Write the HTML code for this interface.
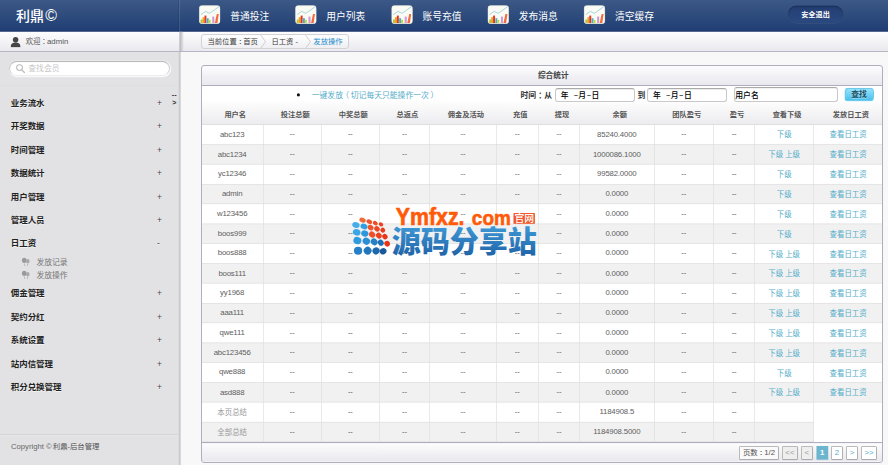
<!DOCTYPE html>
<html lang="zh-CN">
<head>
<meta charset="utf-8">
<title>利鼎-后台管理</title>
<style>
*{box-sizing:border-box;margin:0;padding:0}
html,body{width:888px;height:465px;overflow:hidden;background:#f8f8f8}
body{font-family:"Liberation Sans","Noto Sans CJK SC",sans-serif;font-size:12px;color:#666;position:relative}
#stage{position:absolute;left:0;top:0;width:1366px;height:716px;transform:scale(0.65008);transform-origin:0 0;overflow:hidden;background:#f8f8f8}
a{text-decoration:none;color:#55adc9}
.c{display:inline-block;position:static !important;width:10px;text-indent:2.5px;overflow:visible;white-space:nowrap}
/* header */
#hd{position:absolute;left:0;top:0;width:1366px;height:49px;background:linear-gradient(#3c5886 0%,#2d4b7c 50%,#213f75 94%,#1a3467 100%)}
#hd .sep{position:absolute;left:275.6px;top:0;width:1.5px;height:49px;background:rgba(255,255,255,.2);box-shadow:-1.5px 0 0 rgba(10,25,60,.25)}
#logo{position:absolute;left:24.5px;top:9.8px;font-weight:500;font-size:21.5px;line-height:30px;color:#fff;letter-spacing:0}
.nav{position:absolute;top:0;height:49px}
.nav .ico{position:absolute;left:0;top:8px;width:33px;height:29px}
.nav span{position:absolute;left:48px;top:12px;font-size:15px;line-height:26px;color:#fff;white-space:nowrap}
#logout{position:absolute;left:1212px;top:9px;width:85px;height:26px;border-radius:13px;background:linear-gradient(#233d72,#2b4a80);box-shadow:inset 0 1px 2px rgba(0,0,0,.35),0 1px 0 rgba(255,255,255,.1);color:#fff;font-size:11px;font-weight:bold;line-height:27.5px;text-align:center}
/* subbar */
#sub{position:absolute;left:0;top:49px;width:1366px;height:31px;background:linear-gradient(#fdfdfe,#e8e8ee);border-bottom:1px solid transparent}
#sub .sep{position:absolute;left:275.5px;top:0;width:7px;height:30px;background:linear-gradient(90deg,#b2b2b8,#d2d2d8 55%,rgba(235,235,240,0))}
#user{position:absolute;left:39.5px;top:0;font-size:11.4px;line-height:30px;color:#555;white-space:nowrap}
#uicon{position:absolute;left:16px;top:7px;width:16px;height:17px}
#crumb{position:absolute;left:310px;top:4px;height:22.5px;width:227px;border:1px solid transparent;border-radius:4px;background:linear-gradient(#fff,#eeeef2);font-size:11.3px;line-height:20px;color:#3c3c3c}
#crumb>span{position:absolute;top:0;white-space:nowrap}
#crumb svg{position:absolute;top:0;width:12px;height:20.5px}
/* sidebar */
#side{position:absolute;left:0;top:80px;width:278px;height:636px;background:#e2e2e4}
#side:after{content:"";position:absolute;left:275.3px;top:0;width:2.8px;height:636px;background:linear-gradient(90deg,#c6c6ca,#d4d4d8)}
#search{position:absolute;left:13.5px;top:12.5px;width:249px;height:25px;border-radius:12.5px;background:#fff;border:1px solid transparent;box-shadow:0 1px 0 #f4f4f4,inset 0 1px 2px rgba(0,0,0,.12)}
#search span{position:absolute;left:29px;top:1px;line-height:21px;font-size:12px;color:#c8c8c8}
#sline{position:absolute;left:0;top:51px;width:275px;height:1px;background:#dcdcde;box-shadow:0 1px 0 #e5e5e7}
.mi{position:absolute;left:16.5px;margin-top:1px;font-size:13px;font-weight:bold;color:#222;line-height:36px;height:36px;width:240px;text-shadow:0 1px 0 #f4f4f4;white-space:nowrap}
.mi i{position:absolute;left:225px;top:-0.2px;font-style:normal;font-weight:normal;font-size:13px;color:#444}
.smi{position:absolute;left:56px;font-size:12px;color:#777;line-height:20px;height:20px;white-space:nowrap}
.smi b{position:absolute;left:-23px;top:3px;width:13px;height:14px}
#toggle{position:absolute;left:262px;top:59.0px;font-size:11px;font-weight:bold;line-height:13px;color:#333;width:12px;text-align:center}
#cline{position:absolute;left:0;top:588px;width:275px;height:1px;background:#cdcdd0;box-shadow:0 1px 0 #ececee}
#copy{position:absolute;left:17px;top:597px;font-size:11.8px;line-height:20px;color:#666;white-space:nowrap}
/* panel */
#panel{position:absolute;left:308.7px;top:100.2px;width:1049.3px;height:611px;border:1px solid transparent;border-radius:5px;background:#fff;overflow:hidden}
#ptitle{position:absolute;left:0;top:0;width:1047.3px;height:31px;background:linear-gradient(#fdfdfe,#e8e8ee);border-bottom:1px solid transparent}
#ptitle span{position:absolute;left:490.5px;width:100px;text-align:center;top:0;line-height:30px;font-weight:bold;font-size:11.8px;color:#444}
#tool{position:absolute;left:0;top:31px;width:1047.3px;height:60px;background:linear-gradient(#fff 0%,#fff 35%,#ececef 100%);border-bottom:1px solid #d0d0d6}
#tool .t{position:absolute;top:4px;line-height:20px;white-space:nowrap}
.inp{position:absolute;top:4px;height:21px;border:1px solid transparent;border-radius:4px;background:#fff;box-shadow:inset 0 1px 1px rgba(0,0,0,.1);font-size:12px;line-height:19px;color:#000;font-weight:500;padding-left:8px;white-space:nowrap}
#btn{position:absolute;left:988px;top:3px;width:45.5px;height:21px;border-radius:5.5px;border:1px solid transparent;background-clip:border-box;background:linear-gradient(#9ae3fa,#49beed);color:#1c4d60;font-size:12px;line-height:18px;text-align:center;font-weight:bold;text-shadow:0 1px 0 rgba(255,255,255,.4)}
table{position:absolute;left:0;top:60.4px;border-collapse:collapse;table-layout:fixed;width:1047.3px}
th{height:30px;font-size:11.1px;font-weight:bold;color:#555;text-align:center;padding:0 0 1.6px 9px;vertical-align:middle;line-height:20px}
td{height:30.5px;font-size:11.4px;color:#666;text-align:center;padding:0 0 1px 0;border-right:1px solid #ddd;border-bottom:1px solid #ddd;vertical-align:middle;line-height:20px;white-space:nowrap}
td i{font-style:normal;position:relative;top:-0.8px;color:#555}
td:last-child{border-right:0}
td.g{color:#999}
td.l{font-size:12px;letter-spacing:-0.28px;color:#5e5e5e}
td a,td.g span{position:relative;top:1.2px}
tr.e td{background:#f1f1f1}
td.w{background:#fff !important;border-bottom:0}
#pfoot{position:absolute;left:0;top:579.4px;width:1047.3px;height:31px;background:linear-gradient(#fdfdfe,#e6e6ec);border-top:1px solid transparent}
.pg{position:absolute;top:4px;height:21px;border:1px solid transparent;background:#fff;font-size:12px;line-height:19px;text-align:center;color:#55adc9;box-shadow:0 1px 1px rgba(0,0,0,.08);white-space:nowrap}
.pg.d{background:#eee;color:#999}
.pg.a{background:#6bb5cf;color:#fff;font-weight:bold}
#tool>*,#pfoot>*,#ptitle>*{margin-left:0.9px}
#ov{position:absolute;left:0;top:0;width:888px;height:465px;pointer-events:none}
#ov div{position:absolute;box-sizing:border-box}
.ln{background:#adafbf}
.bx{border:1px solid #bababa;border-bottom-color:#acacac;border-right-color:#b0b0b0;border-radius:1.5px}
.dh{display:inline-block;transform:scaleX(1.9) translateY(-1px);margin:0 2px 0 2.4px}
.ib{border:1px solid #c9c9c9;border-top-color:#aaa;border-radius:3px}
/* watermark */
#wm{position:absolute;left:345px;top:205px;width:200px;height:55px;overflow:visible}
</style>
</head>
<body>
<div id="stage">
  <div id="hd">
    <div id="logo">利鼎<span style="font-size:24.5px;margin-left:2px;position:relative;top:0.5px">©</span></div>
    <div class="sep"></div>
    <div class="nav" style="left:306px"><svg class="ico" viewBox="0 0 33 29"><use href="#chart"/></svg><span>普通投注</span></div>
    <div class="nav" style="left:454px"><svg class="ico" viewBox="0 0 33 29"><use href="#chart"/></svg><span>用户列表</span></div>
    <div class="nav" style="left:602px"><svg class="ico" viewBox="0 0 33 29"><use href="#chart"/></svg><span>账号充值</span></div>
    <div class="nav" style="left:750px"><svg class="ico" viewBox="0 0 33 29"><use href="#chart"/></svg><span>发布消息</span></div>
    <div class="nav" style="left:898px"><svg class="ico" viewBox="0 0 33 29"><use href="#chart"/></svg><span>清空缓存</span></div>
    <div id="logout">安全退出</div>
  </div>
  <div id="sub">
    <svg id="uicon" viewBox="0 0 16 17"><circle cx="8" cy="5" r="4.2" fill="#444"/><path d="M0.5 16.5 C0.5 11 4 9.5 8 9.5 C12 9.5 15.5 11 15.5 16.5 Z" fill="#444"/></svg>
    <div id="user">欢迎<span class="c">：</span><span style="font-size:12px">admin</span></div>
    <div class="sep"></div>
    <div id="crumb"><span style="left:8px">当前位置<span class="c">：</span>首页</span><span style="left:106.5px">日工资 -</span><span style="left:171px;color:#1f8ecb">发放操作</span>
      <svg style="left:87px" viewBox="0 0 12 20.5"><path d="M3 0 L10.5 10.25 L3 20.5" fill="none" stroke="#c2c2c8" stroke-width="1.2"/></svg>
      <svg style="left:155.5px" viewBox="0 0 12 20.5"><path d="M3 0 L10.5 10.25 L3 20.5" fill="none" stroke="#c2c2c8" stroke-width="1.2"/></svg>
    </div>
  </div>
  <div id="side">
    <div id="search"><svg style="position:absolute;left:9px;top:4px;width:15px;height:15px" viewBox="0 0 15 15"><circle cx="6" cy="6" r="4.5" fill="none" stroke="#bbb" stroke-width="1.6"/><path d="M9.5 9.5 L13.5 13.5" stroke="#bbb" stroke-width="2" stroke-linecap="round"/></svg><span>查找会员</span></div>
    <div id="sline"></div>
    <div id="toggle">--<br>&gt;</div>
    <div class="mi" style="top:60.4px">业务流水<i>+</i></div>
    <div class="mi" style="top:96.4px">开奖数据<i>+</i></div>
    <div class="mi" style="top:132.4px">时间管理<i>+</i></div>
    <div class="mi" style="top:168.4px">数据统计<i>+</i></div>
    <div class="mi" style="top:204.4px">用户管理<i>+</i></div>
    <div class="mi" style="top:240.4px">管理人员<i>+</i></div>
    <div class="mi" style="top:276.4px">日工资<i>-</i></div>
    <div class="smi" style="top:313.0px"><b><svg viewBox="0 0 13 14" width="13" height="14"><ellipse cx="4.3" cy="4.5" rx="3.6" ry="4.2" fill="#9a9a9a"/><ellipse cx="9.8" cy="6" rx="2.6" ry="3.4" fill="#a8a8a8"/><path d="M4.5 9.5 L5.2 13 M9.6 10 L9.2 13" stroke="#a0a0a0" stroke-width="1" fill="none"/></svg></b>发放记录</div>
    <div class="smi" style="top:332.7px"><b><svg viewBox="0 0 13 14" width="13" height="14"><ellipse cx="4.3" cy="4.5" rx="3.6" ry="4.2" fill="#9a9a9a"/><ellipse cx="9.8" cy="6" rx="2.6" ry="3.4" fill="#a8a8a8"/><path d="M4.5 9.5 L5.2 13 M9.6 10 L9.2 13" stroke="#a0a0a0" stroke-width="1" fill="none"/></svg></b>发放操作</div>
    <div class="mi" style="top:352.6px">佣金管理<i>+</i></div>
    <div class="mi" style="top:388.7px">契约分红<i>+</i></div>
    <div class="mi" style="top:424.9px">系统设置<i>+</i></div>
    <div class="mi" style="top:461.0px">站内信管理<i>+</i></div>
    <div class="mi" style="top:497.2px">积分兑换管理<i>+</i></div>
    <div id="cline"></div>
    <div id="copy">Copyright © <span style="font-size:11.3px;color:#505050;margin-left:-1.5px">利鼎-后台管理</span></div>
  </div>
  <div id="panel">
    <div id="ptitle"><span>综合统计</span></div>
    <div id="tool">
      <svg style="position:absolute;left:145px;top:11px;width:6px;height:6px" viewBox="0 0 6 6"><circle cx="3" cy="3" r="2.4" fill="#111"/></svg>
      <a class="t" style="left:169px">一键发放<span style="position:relative;left:-2.5px">（</span>切记每天只能操作一次<span style="position:relative;left:2.5px">）</span></a>
      <span class="t" style="left:490px;font-weight:bold;color:#333">时间<span class="c" style="width:12.5px;text-indent:3.5px">：</span>从</span>
      <div class="inp" style="left:543px;width:123px">年 &nbsp;<span class="dh">-</span>月<span class="dh">-</span>日</div>
      <span class="t" style="left:670px;font-weight:bold;color:#333">到</span>
      <div class="inp" style="left:685px;width:123px">年 &nbsp;<span class="dh">-</span>月<span class="dh">-</span>日</div>
      <div class="inp" style="left:819px;width:159px;top:1.5px;height:23.5px;padding-left:0.5px;line-height:22px;border-radius:5px">用户名</div>
      <div id="btn">查找</div>
    </div>
    <table>
      <colgroup><col style="width:95.32px"><col style="width:89.32px"><col style="width:89.32px"><col style="width:77.00px"><col style="width:102.87px"><col style="width:64.68px"><col style="width:63.44px"><col style="width:114.42px"><col style="width:91.78px"><col style="width:62.98px"><col style="width:91.01px"><col style="width:105.18px"></colgroup>
      <thead><tr><th>用户名</th><th>投注总额</th><th>中奖总额</th><th>总返点</th><th>佣金及活动</th><th>充值</th><th>提现</th><th>余额</th><th>团队盈亏</th><th>盈亏</th><th>查看下级</th><th>发放日工资</th></tr></thead>
      <tbody>
      <tr><td class="l">abc123</td><td><i>--</i></td><td><i>--</i></td><td><i>--</i></td><td><i>--</i></td><td><i>--</i></td><td><i>--</i></td><td class="l">85240.4000</td><td><i>--</i></td><td><i>--</i></td><td><a>下级</a></td><td><a>查看日工资</a></td></tr>
      <tr class="e"><td class="l">abc1234</td><td><i>--</i></td><td><i>--</i></td><td><i>--</i></td><td><i>--</i></td><td><i>--</i></td><td><i>--</i></td><td class="l">1000086.1000</td><td><i>--</i></td><td><i>--</i></td><td><a>下级</a> <a>上级</a></td><td><a>查看日工资</a></td></tr>
      <tr><td class="l">yc12346</td><td><i>--</i></td><td><i>--</i></td><td><i>--</i></td><td><i>--</i></td><td><i>--</i></td><td><i>--</i></td><td class="l">99582.0000</td><td><i>--</i></td><td><i>--</i></td><td><a>下级</a></td><td><a>查看日工资</a></td></tr>
      <tr class="e"><td class="l">admin</td><td><i>--</i></td><td><i>--</i></td><td><i>--</i></td><td><i>--</i></td><td><i>--</i></td><td><i>--</i></td><td class="l">0.0000</td><td><i>--</i></td><td><i>--</i></td><td><a>下级</a></td><td><a>查看日工资</a></td></tr>
      <tr><td class="l">w123456</td><td><i>--</i></td><td><i>--</i></td><td><i>--</i></td><td><i>--</i></td><td><i>--</i></td><td><i>--</i></td><td class="l">0.0000</td><td><i>--</i></td><td><i>--</i></td><td><a>下级</a></td><td><a>查看日工资</a></td></tr>
      <tr class="e"><td class="l">boos999</td><td><i>--</i></td><td><i>--</i></td><td><i>--</i></td><td><i>--</i></td><td><i>--</i></td><td><i>--</i></td><td class="l">0.0000</td><td><i>--</i></td><td><i>--</i></td><td><a>下级</a></td><td><a>查看日工资</a></td></tr>
      <tr><td class="l">boos888</td><td><i>--</i></td><td><i>--</i></td><td><i>--</i></td><td><i>--</i></td><td><i>--</i></td><td><i>--</i></td><td class="l">0.0000</td><td><i>--</i></td><td><i>--</i></td><td><a>下级</a> <a>上级</a></td><td><a>查看日工资</a></td></tr>
      <tr class="e"><td class="l">boos111</td><td><i>--</i></td><td><i>--</i></td><td><i>--</i></td><td><i>--</i></td><td><i>--</i></td><td><i>--</i></td><td class="l">0.0000</td><td><i>--</i></td><td><i>--</i></td><td><a>下级</a> <a>上级</a></td><td><a>查看日工资</a></td></tr>
      <tr><td class="l">yy1968</td><td><i>--</i></td><td><i>--</i></td><td><i>--</i></td><td><i>--</i></td><td><i>--</i></td><td><i>--</i></td><td class="l">0.0000</td><td><i>--</i></td><td><i>--</i></td><td><a>下级</a> <a>上级</a></td><td><a>查看日工资</a></td></tr>
      <tr class="e"><td class="l">aaa111</td><td><i>--</i></td><td><i>--</i></td><td><i>--</i></td><td><i>--</i></td><td><i>--</i></td><td><i>--</i></td><td class="l">0.0000</td><td><i>--</i></td><td><i>--</i></td><td><a>下级</a> <a>上级</a></td><td><a>查看日工资</a></td></tr>
      <tr><td class="l">qwe111</td><td><i>--</i></td><td><i>--</i></td><td><i>--</i></td><td><i>--</i></td><td><i>--</i></td><td><i>--</i></td><td class="l">0.0000</td><td><i>--</i></td><td><i>--</i></td><td><a>下级</a> <a>上级</a></td><td><a>查看日工资</a></td></tr>
      <tr class="e"><td class="l">abc123456</td><td><i>--</i></td><td><i>--</i></td><td><i>--</i></td><td><i>--</i></td><td><i>--</i></td><td><i>--</i></td><td class="l">0.0000</td><td><i>--</i></td><td><i>--</i></td><td><a>下级</a> <a>上级</a></td><td><a>查看日工资</a></td></tr>
      <tr><td class="l">qwe888</td><td><i>--</i></td><td><i>--</i></td><td><i>--</i></td><td><i>--</i></td><td><i>--</i></td><td><i>--</i></td><td class="l">0.0000</td><td><i>--</i></td><td><i>--</i></td><td><a>下级</a></td><td><a>查看日工资</a></td></tr>
      <tr class="e"><td class="l">asd888</td><td><i>--</i></td><td><i>--</i></td><td><i>--</i></td><td><i>--</i></td><td><i>--</i></td><td><i>--</i></td><td class="l">0.0000</td><td><i>--</i></td><td><i>--</i></td><td><a>下级</a> <a>上级</a></td><td><a>查看日工资</a></td></tr>
      <tr><td class="g"><span>本页总结</span></td><td><i>--</i></td><td><i>--</i></td><td><i>--</i></td><td><i>--</i></td><td><i>--</i></td><td><i>--</i></td><td class="l">1184908.5</td><td><i>--</i></td><td><i>--</i></td><td></td><td class="w"></td></tr>
      <tr class="e"><td class="g"><span>全部总结</span></td><td><i>--</i></td><td><i>--</i></td><td><i>--</i></td><td><i>--</i></td><td><i>--</i></td><td><i>--</i></td><td class="l">1184908.5000</td><td><i>--</i></td><td><i>--</i></td><td></td><td class="w"></td></tr>
      </tbody>
    </table>
    <div id="pfoot">
      <div class="pg" style="left:826px;width:62px;color:#555;background:#fafafa"><span style="font-size:11.3px">页数<span class="c">：</span></span>1/2</div>
      <div class="pg d" style="left:892px;width:25px">&lt;&lt;</div>
      <div class="pg d" style="left:921px;width:19px">&lt;</div>
      <div class="pg a" style="left:945px;width:18px">1</div>
      <div class="pg" style="left:968px;width:18px">2</div>
      <div class="pg" style="left:991px;width:18px">&gt;</div>
      <div class="pg" style="left:1014px;width:24.5px">&gt;&gt;</div>
    </div>
  </div>
</div>
<div id="ov">
  <div style="left:201px;top:65px;width:682px;height:398px;border:1px solid #adafbf;border-radius:3px"></div>
  <div class="ln" style="left:202px;top:85px;width:680px;height:1px"></div>
  <div class="ln" style="left:202px;top:442px;width:680px;height:1px"></div>
  <div style="left:0;top:51px;width:888px;height:1px;background:#b5b6c4"></div>
  <div class="bx" style="left:739px;top:446px;width:40px;height:14px"></div>
  <div class="bx" style="left:782px;top:446px;width:16px;height:14px"></div>
  <div class="bx" style="left:801px;top:446px;width:12px;height:14px"></div>
  <div class="bx" style="left:831px;top:446px;width:12px;height:14px"></div>
  <div class="bx" style="left:846px;top:446px;width:12px;height:14px"></div>
  <div class="bx" style="left:861px;top:446px;width:16px;height:14px"></div>
  <div class="ib" style="left:555px;top:88px;width:80px;height:14px"></div>
  <div class="ib" style="left:647px;top:88px;width:80px;height:14px"></div>
  <div class="ib" style="left:734px;top:87px;width:104px;height:15px"></div>
  <div style="left:845px;top:88px;width:29px;height:13px;border:1px solid #6ccaec;border-radius:3.5px"></div>
  <div style="left:9px;top:61px;width:161px;height:15px;border:1px solid #cfcfcf;border-top-color:#b9b9b9;border-bottom-color:#ececec;border-radius:7.5px"></div>
  <div style="left:201px;top:34px;width:148px;height:15px;border:1px solid #d2d2d6;border-radius:3px"></div>
</div>
<svg id="wm" viewBox="0 0 1690 465" width="200" height="55">
  <defs>
    <linearGradient id="bl" x1="0" y1="0" x2="0" y2="1"><stop offset="0" stop-color="#46a6e2"/><stop offset="1" stop-color="#1a5aa0"/></linearGradient>
  </defs>
  <g>
    <ellipse cx="148" cy="128" rx="28" ry="20" fill="#f26a3a" transform="rotate(25 148 128)"/>
    <ellipse cx="205" cy="141" rx="25" ry="18" fill="#f0542c" transform="rotate(30 205 141)"/>
    <ellipse cx="256" cy="153" rx="22" ry="17" fill="#ee4a26" transform="rotate(32 256 153)"/>
    <ellipse cx="304" cy="164" rx="20" ry="16" fill="#ec4020" transform="rotate(35 304 164)"/>
    <ellipse cx="92" cy="169" rx="32" ry="24" fill="#45aeea" transform="rotate(20 92 169)"/>
    <ellipse cx="160" cy="181" rx="30" ry="23" fill="#329fe2" transform="rotate(25 160 181)"/>
    <ellipse cx="216" cy="191" rx="26" ry="22" fill="#f0522a" transform="rotate(35 216 191)"/>
    <ellipse cx="270" cy="202" rx="24" ry="21" fill="#ee4422" transform="rotate(40 270 202)"/>
    <ellipse cx="319" cy="213" rx="21" ry="20" fill="#ec3a1c" transform="rotate(45 319 213)"/>
    <ellipse cx="98" cy="231" rx="33" ry="27" fill="#3aa6e6" transform="rotate(20 98 231)"/>
    <ellipse cx="167" cy="241" rx="31" ry="26" fill="#2d97dc" transform="rotate(25 167 241)"/>
    <ellipse cx="229" cy="250" rx="28" ry="24" fill="#f04e28" transform="rotate(40 229 250)"/>
    <ellipse cx="286" cy="259" rx="26" ry="22" fill="#ee3f1f" transform="rotate(45 286 259)"/>
    <ellipse cx="337" cy="268" rx="24" ry="21" fill="#ea3418" transform="rotate(50 337 268)"/>
    <ellipse cx="104" cy="301" rx="34" ry="30" fill="#2e9be0" transform="rotate(20 104 301)"/>
    <ellipse cx="180" cy="306" rx="32" ry="29" fill="#2a8fd4" transform="rotate(30 180 306)"/>
    <ellipse cx="246" cy="312" rx="30" ry="27" fill="#2680c6" transform="rotate(40 246 312)"/>
    <ellipse cx="302" cy="319" rx="27" ry="24" fill="#1f70b6" transform="rotate(50 302 319)"/>
    <ellipse cx="356" cy="327" rx="25" ry="23" fill="#ea3416" transform="rotate(55 356 327)"/>
    <ellipse cx="110" cy="386" rx="35" ry="34" fill="#2680c8"/>
    <ellipse cx="191" cy="386" rx="33" ry="33" fill="#2276bc" transform="rotate(40 191 386)"/>
    <ellipse cx="262" cy="388" rx="30" ry="30" fill="#1d68ac" transform="rotate(50 262 388)"/>
    <ellipse cx="322" cy="391" rx="26" ry="29" fill="#1a5a9c" transform="rotate(60 322 391)"/>
  </g>
  <text y="165" font-family="'Liberation Sans',sans-serif" font-weight="bold" font-size="196" fill="#ff5a08" stroke="#ff5a08" stroke-width="5" stroke-linejoin="round"><tspan x="428" textLength="582" lengthAdjust="spacingAndGlyphs">Ymfxz.</tspan><tspan x="1072" font-size="178" textLength="330" lengthAdjust="spacingAndGlyphs">com</tspan></text>
  <rect x="1424" y="68" width="181" height="91" fill="#f2552a"/>
  <text x="1432" y="146" font-family="'Noto Sans CJK SC','Liberation Sans',sans-serif" font-weight="500" font-size="82" fill="#fff" textLength="166" lengthAdjust="spacingAndGlyphs">官网</text>
  <text x="394" y="400" font-family="'Noto Sans CJK SC','Liberation Sans',sans-serif" font-weight="900" font-size="250" fill="url(#bl)" textLength="1226" lengthAdjust="spacingAndGlyphs">源码分享站</text>
</svg>
<svg width="0" height="0" style="position:absolute">
  <defs>
    <g id="chart">
      <rect x="0.5" y="0.5" width="32" height="28" rx="4.5" fill="#fbfbf5" stroke="#e9e6d8"/>
      <path d="M3 14.5 L10 9.5 L16.5 12.5 L30.5 2.5" fill="none" stroke="#86c6d2" stroke-width="1.1"/>
      <rect x="2.5" y="22" width="3" height="5.5" fill="#a6c83a"/>
      <rect x="5.5" y="18.5" width="3" height="9" fill="#f2a01f"/>
      <rect x="8.5" y="16" width="3" height="11.5" fill="#e2361f"/>
      <rect x="12" y="20" width="3" height="7.5" fill="#45acd8"/>
      <rect x="15" y="22.5" width="3" height="5" fill="#c9da2e"/>
      <rect x="20.5" y="17.5" width="3.2" height="10" fill="#cf9ad6"/>
      <path d="M24.5 27.5 L27.5 13.5 L30.5 13.5 L28.5 27.5 Z" fill="#f36d3c"/>
    </g>
  </defs>
</svg>
</body>
</html>
